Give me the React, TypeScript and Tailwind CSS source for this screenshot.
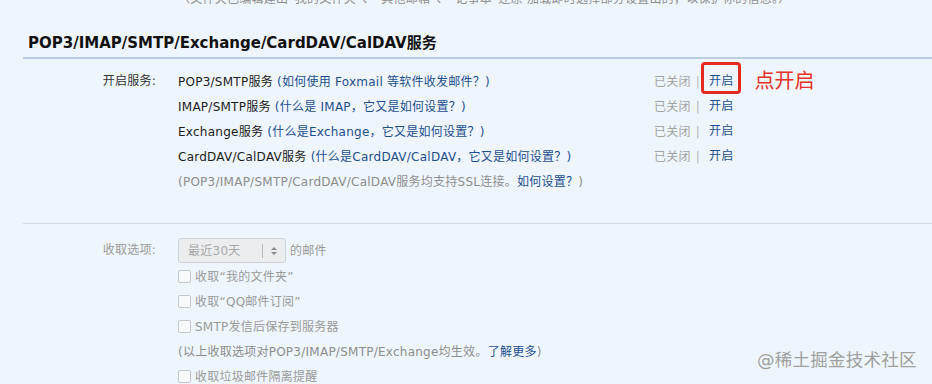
import React from "react";

const font = { fontFamily: '"DejaVu Sans", "Noto Sans CJK SC", sans-serif' };

const services = [
  { name: "POP3/SMTP服务", tip: "如何使用 Foxmail 等软件收发邮件？" },
  { name: "IMAP/SMTP服务", tip: "什么是 IMAP，它又是如何设置？" },
  { name: "Exchange服务", tip: "什么是Exchange，它又是如何设置？" },
  { name: "CardDAV/CalDAV服务", tip: "什么是CardDAV/CalDAV，它又是如何设置？" },
];

const Checkbox: React.FC<{ label: string }> = ({ label }) => (
  <div className="h-[25px] flex items-center">
    <span className="w-[13px] h-[13px] border border-[#c4c8cc] rounded-[2px] bg-[#f7f9fb]" />
    <span className="ml-[4px] text-[#9a9a9a]">{label}</span>
  </div>
);

export default function App() {
  return (
    <div className="w-[932px] h-[384px] overflow-hidden bg-[#eff5fd] text-[12px] tracking-[0.25px] text-[#1c1c1c] relative" style={font}>
      <div className="h-[8px] overflow-hidden pl-[178px]">
        <div className="-mt-[11px] leading-[20px] text-[#8f8f8f] whitespace-nowrap">
          （文件夹已编辑建出“我的文件夹”、“其他邮箱”、“记事本”还原 加载即时选择部分设置出的，以保护你的信息。）
        </div>
      </div>

      <div className="ml-[23px] mt-[25px] border-b-2 border-[#b9cde3] pb-[4px] pl-[5px]">
        <h2 className="text-[15px] tracking-normal font-bold leading-[20px] text-[#111]">POP3/IMAP/SMTP/Exchange/CardDAV/CalDAV服务</h2>
      </div>

      <div className="flex pt-[10px]">
        <div className="w-[156px] text-right leading-[25px] text-[#333]">开启服务:</div>
        <div className="ml-[22px]">
          {services.map((s, i) => (
            <div key={s.name} className="h-[25px] flex items-center">
              <div className="w-[476px] whitespace-nowrap">
                {s.name} <span className="text-[#1d4f8f]">({s.tip})</span>
              </div>
              <span className="text-[#a3a3a3]">已关闭</span>
              <span className="text-[#b5b5b5] ml-[5px]">|</span>
              <span className="relative ml-[9px] leading-[25px] text-[#1d4f8f]">
                开启
                {i === 0 && (
                  <span className="absolute -left-[8px] -top-[7px] w-[40px] h-[32px] border-[3px] border-[#e22a22] rounded-[4px]" />
                )}
              </span>
              {i === 0 && (
                <span className="ml-[21px] text-[20px] tracking-normal leading-[25px] text-[#e43129]">点开启</span>
              )}
            </div>
          ))}
          <div className="h-[25px] flex items-center text-[#8d8d8d] whitespace-nowrap">
            (POP3/IMAP/SMTP/CardDAV/CalDAV服务均支持SSL连接。<span className="text-[#1d4f8f]">如何设置？</span>)
          </div>
        </div>
      </div>

      <div className="ml-[23px] mt-[29px] border-t border-[#d5dbe2]" />

      <div className="flex pt-[13px]">
        <div className="w-[156px] text-right leading-[27px] text-[#9a9a9a]">收取选项:</div>
        <div className="ml-[22px]">
          <div className="h-[27px] flex items-center">
            <div className="w-[108px] h-[25px] border border-[#cfd3d7] rounded-[3px] bg-[#ebedef] flex items-center">
              <span className="ml-[9px] text-[#a8a8a8]">最近30天</span>
              <span className="ml-auto h-[14px] border-l border-[#bcbcbc]" />
              <svg className="mx-[8px]" width="6" height="10" viewBox="0 0 6 10">
                <path d="M0 4 L3 1 L6 4 Z M0 6 L3 9 L6 6 Z" fill="#8a8a8a" />
              </svg>
            </div>
            <span className="ml-[4px] text-[#9a9a9a]">的邮件</span>
          </div>
          <Checkbox label="收取“我的文件夹”" />
          <Checkbox label="收取“QQ邮件订阅”" />
          <Checkbox label="SMTP发信后保存到服务器" />
          <div className="h-[25px] flex items-center text-[#8d8d8d] whitespace-nowrap">
            (以上收取选项对POP3/IMAP/SMTP/Exchange均生效。<span className="text-[#1d4f8f]">了解更多</span>)
          </div>
          <Checkbox label="收取垃圾邮件隔离提醒" />
        </div>
      </div>

      <div className="absolute left-[757px] top-[348px] text-[17.5px] leading-[24px] text-[#a0a0a0]">@稀土掘金技术社区</div>
    </div>
  );
}
